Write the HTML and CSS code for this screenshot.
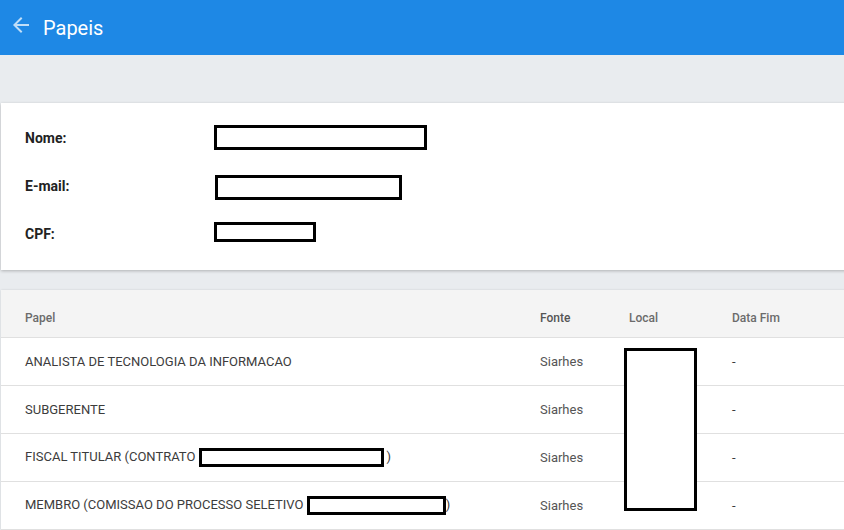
FILE: index.html
```html
<!DOCTYPE html>
<html lang="pt">
<head>
<meta charset="utf-8">
<title>Papeis</title>
<link rel="stylesheet" href="styles.css">
</head>
<body>
<header class="topbar">
  <svg class="back" width="24" height="24" viewBox="0 0 24 24"><path d="M20 11H7.83l5.59-5.59L12 4l-8 8 8 8 1.41-1.41L7.83 13H20v-2z" fill="currentColor"/></svg>
  <h1 class="title">Papeis</h1>
</header>
<main class="content">
  <section class="card info">
    <div class="info-row"><span class="label">Nome:</span><span class="redact r-nome"></span></div>
    <div class="info-row"><span class="label">E-mail:</span><span class="redact r-email"></span></div>
    <div class="info-row"><span class="label">CPF:</span><span class="redact r-cpf"></span></div>
  </section>
  <section class="card table">
    <div class="trow thead">
      <span>Papel</span><span>Fonte</span><span>Local</span><span>Data Fim</span>
    </div>
    <div class="trow">
      <span>ANALISTA DE TECNOLOGIA DA INFORMACAO</span><span>Siarhes</span><span></span><span>-</span>
    </div>
    <div class="trow">
      <span>SUBGERENTE</span><span>Siarhes</span><span></span><span>-</span>
    </div>
    <div class="trow">
      <span>FISCAL TITULAR (CONTRATO <span class="redact r-fiscal"></span>)</span><span>Siarhes</span><span></span><span>-</span>
    </div>
    <div class="trow">
      <span>MEMBRO (COMISSAO DO PROCESSO SELETIVO <span class="redact r-membro"></span>)</span><span>Siarhes</span><span></span><span>-</span>
    </div>
    <span class="redact r-local"></span>
  </section>
</main>
</body>
</html>
```
FILE: styles.css
```css
html, body {
  margin: 0;
  padding: 0;
}
body {
  width: 844px;
  height: 530px;
  overflow: hidden;
  background: #e9ecef;
  font-family: Roboto, "Liberation Sans", sans-serif;
  color: #3c3c3c;
}
.topbar {
  height: 55px;
  background: #1e88e5;
  display: flex;
  align-items: center;
  padding-left: 9px;
  box-sizing: border-box;
}
.back {
  color: rgba(255, 255, 255, 0.72);
  margin-top: -5px;
}
.title {
  margin: 1px 0 0 10px;
  font-size: 20px;
  font-weight: 400;
  color: #fff;
  line-height: 24px;
}
.content {
  padding: 48px 0 0 1px;
  display: flex;
  flex-direction: column;
  gap: 20px;
}
.card {
  background: #fff;
  width: 860px;
  box-shadow: 0 1px 3px rgba(0, 0, 0, 0.25);
}
.info {
  height: 167px;
  box-sizing: border-box;
  padding: 11px 0 0 24px;
}
.info-row {
  height: 48px;
  display: flex;
  align-items: center;
}
.label {
  width: 189px;
  font-size: 14px;
  font-weight: 700;
  color: #222;
}
.redact {
  display: inline-block;
  box-sizing: border-box;
  border: 3px solid #000;
  background: #fff;
  vertical-align: middle;
}
.r-nome { width: 213px; height: 25px; margin-top: -1px; }
.r-email { width: 187px; height: 25px; margin-left: 1px; margin-top: 2px; }
.r-cpf { width: 102px; height: 20px; margin-top: -4px; }
.table {
  position: relative;
  box-shadow: 0 0 2px rgba(0, 0, 0, 0.12);
}
.trow {
  display: grid;
  grid-template-columns: 515px 89px 103px 1fr;
  padding-left: 24px;
  height: 48px;
  align-items: center;
  border-bottom: 1px solid #e0e0e0;
  font-size: 13px;
  box-sizing: border-box;
}
.thead {
  background: #f4f4f4;
  color: #6b6b6b;
  font-size: 12px;
  font-weight: 500;
  padding-top: 8px;
}
.trow > span:nth-child(2) { color: #555; }
.r-fiscal { width: 185px; height: 19px; margin-left: 0; margin-right: 3px; margin-top: -1px; }
.r-membro { width: 139px; height: 19px; margin-left: 0; margin-top: -1px; }
.r-local {
  position: absolute;
  left: 623px;
  top: 58px;
  width: 73px;
  height: 163px;
}
```
